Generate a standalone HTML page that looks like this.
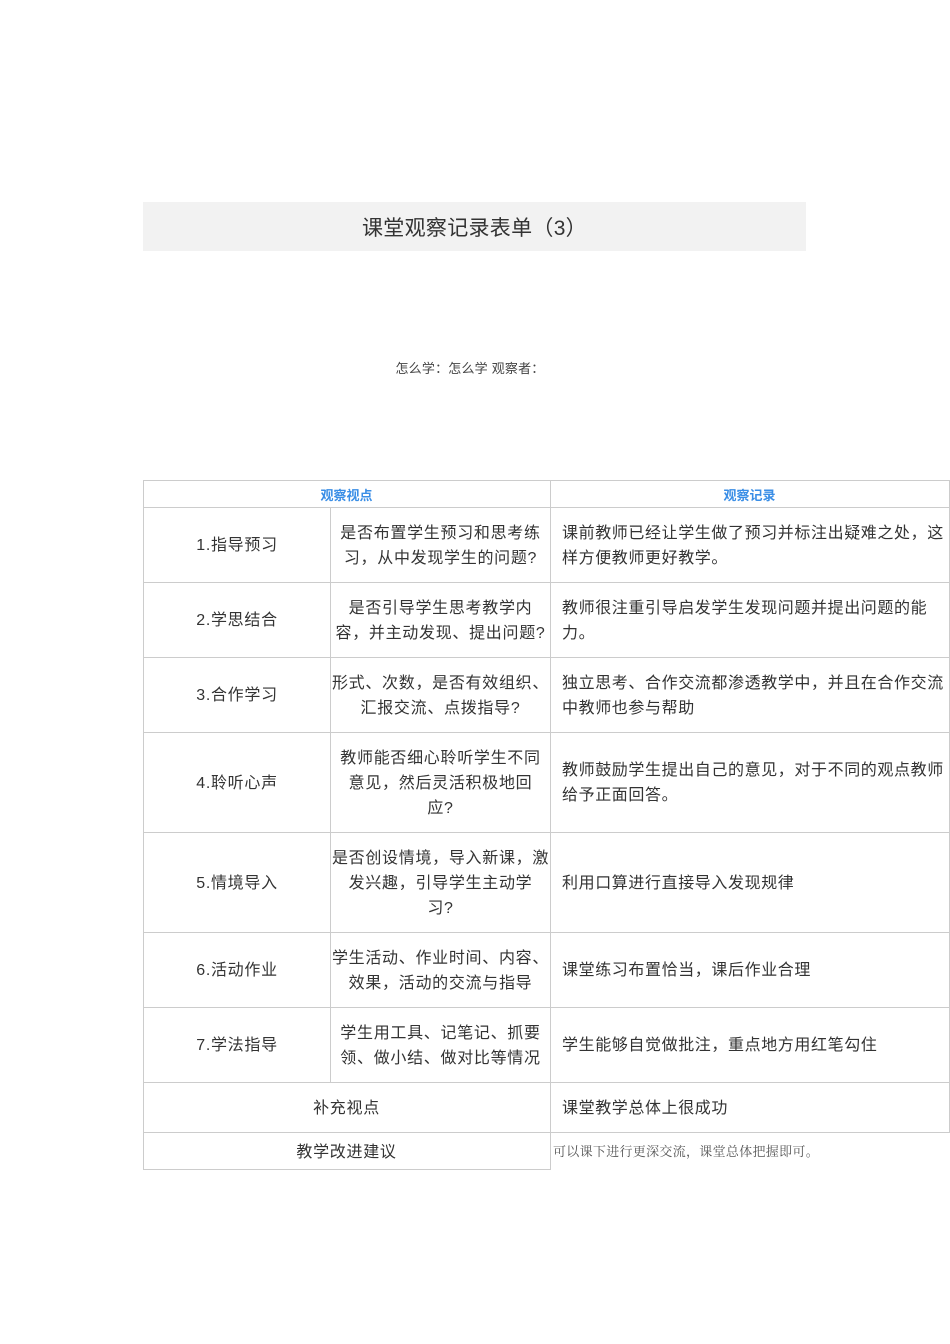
<!DOCTYPE html>
<html><head><meta charset="utf-8"><style>
body{margin:0;width:950px;height:1344px;background:#fff;position:relative;font-family:"Liberation Sans","Noto Sans CJK SC",sans-serif;color:#333;overflow:hidden}
.a{position:absolute;box-sizing:border-box}
.c{display:flex;align-items:center;justify-content:center;text-align:center;font-size:16px;line-height:25px;padding-top:2px;letter-spacing:0.7px}
.l{display:flex;align-items:center;padding-left:12px;font-size:16px;line-height:25px;padding-top:2px;white-space:nowrap;letter-spacing:0.6px}
.h{position:absolute;background:#ccc}
</style></head><body>
<div class="a c" style="left:143px;top:202px;width:663px;height:49px;background:#f2f2f2;font-size:21px;color:#333;padding-top:4px;letter-spacing:0.3px">课堂观察记录表单（3）</div>
<div class="a c" style="left:380px;top:357px;width:180px;height:20px;font-size:13px;color:#444;letter-spacing:0.2px">怎么学：怎么学 观察者：</div>

<div class="a c" style="left:143px;top:481px;width:407px;height:26px;font-size:13px;color:#3a8ee6;font-weight:bold;letter-spacing:0">观察视点</div>
<div class="a c" style="left:550px;top:481px;width:399px;height:26px;font-size:13px;color:#3a8ee6;font-weight:bold;letter-spacing:0">观察记录</div>

<div class="a c" style="left:143px;top:507px;width:188px;height:75px">1.指导预习</div>
<div class="a c" style="left:331px;top:507px;width:219px;height:75px">是否布置学生预习和思考练<br>习，从中发现学生的问题?</div>
<div class="a l" style="left:550px;top:507px;width:399px;height:75px">课前教师已经让学生做了预习并标注出疑难之处，这<br>样方便教师更好教学。</div>

<div class="a c" style="left:143px;top:582px;width:188px;height:75px">2.学思结合</div>
<div class="a c" style="left:331px;top:582px;width:219px;height:75px">是否引导学生思考教学内<br>容，并主动发现、提出问题?</div>
<div class="a l" style="left:550px;top:582px;width:399px;height:75px">教师很注重引导启发学生发现问题并提出问题的能<br>力。</div>

<div class="a c" style="left:143px;top:657px;width:188px;height:75px">3.合作学习</div>
<div class="a c" style="left:331px;top:657px;width:219px;height:75px">形式、次数，是否有效组织、<br>汇报交流、点拨指导?</div>
<div class="a l" style="left:550px;top:657px;width:399px;height:75px">独立思考、合作交流都渗透教学中，并且在合作交流<br>中教师也参与帮助</div>

<div class="a c" style="left:143px;top:732px;width:188px;height:100px">4.聆听心声</div>
<div class="a c" style="left:331px;top:732px;width:219px;height:100px">教师能否细心聆听学生不同<br>意见，然后灵活积极地回<br>应?</div>
<div class="a l" style="left:550px;top:732px;width:399px;height:100px">教师鼓励学生提出自己的意见，对于不同的观点教师<br>给予正面回答。</div>

<div class="a c" style="left:143px;top:832px;width:188px;height:100px">5.情境导入</div>
<div class="a c" style="left:331px;top:832px;width:219px;height:100px">是否创设情境，导入新课，激<br>发兴趣，引导学生主动学<br>习?</div>
<div class="a l" style="left:550px;top:832px;width:399px;height:100px">利用口算进行直接导入发现规律</div>

<div class="a c" style="left:143px;top:932px;width:188px;height:75px">6.活动作业</div>
<div class="a c" style="left:331px;top:932px;width:219px;height:75px">学生活动、作业时间、内容、<br>效果，活动的交流与指导</div>
<div class="a l" style="left:550px;top:932px;width:399px;height:75px">课堂练习布置恰当，课后作业合理</div>

<div class="a c" style="left:143px;top:1007px;width:188px;height:75px">7.学法指导</div>
<div class="a c" style="left:331px;top:1007px;width:219px;height:75px">学生用工具、记笔记、抓要<br>领、做小结、做对比等情况</div>
<div class="a l" style="left:550px;top:1007px;width:399px;height:75px">学生能够自觉做批注，重点地方用红笔勾住</div>

<div class="a c" style="left:143px;top:1082px;width:407px;height:50px">补充视点</div>
<div class="a l" style="left:550px;top:1082px;width:399px;height:50px">课堂教学总体上很成功</div>
<div class="a c" style="left:143px;top:1132px;width:407px;height:38px">教学改进建议</div>
<div class="a" style="left:553px;top:1141px;font-family:'Noto Serif CJK SC',serif;font-size:13px;color:#555;letter-spacing:0.3px">可以课下进行更深交流，课堂总体把握即可。</div>

<div class="h" style="left:143px;top:480px;width:807px;height:1px"></div>
<div class="h" style="left:143px;top:507px;width:807px;height:1px"></div>
<div class="h" style="left:143px;top:582px;width:807px;height:1px"></div>
<div class="h" style="left:143px;top:657px;width:807px;height:1px"></div>
<div class="h" style="left:143px;top:732px;width:807px;height:1px"></div>
<div class="h" style="left:143px;top:832px;width:807px;height:1px"></div>
<div class="h" style="left:143px;top:932px;width:807px;height:1px"></div>
<div class="h" style="left:143px;top:1007px;width:807px;height:1px"></div>
<div class="h" style="left:143px;top:1082px;width:807px;height:1px"></div>
<div class="h" style="left:143px;top:1132px;width:807px;height:1px"></div>
<div class="h" style="left:143px;top:1169px;width:408px;height:1px"></div>
<div class="h" style="left:143px;top:480px;width:1px;height:690px"></div>
<div class="h" style="left:330px;top:507px;width:1px;height:575px"></div>
<div class="h" style="left:550px;top:480px;width:1px;height:690px"></div>
<div class="h" style="left:949px;top:480px;width:1px;height:652px"></div>
</body></html>
